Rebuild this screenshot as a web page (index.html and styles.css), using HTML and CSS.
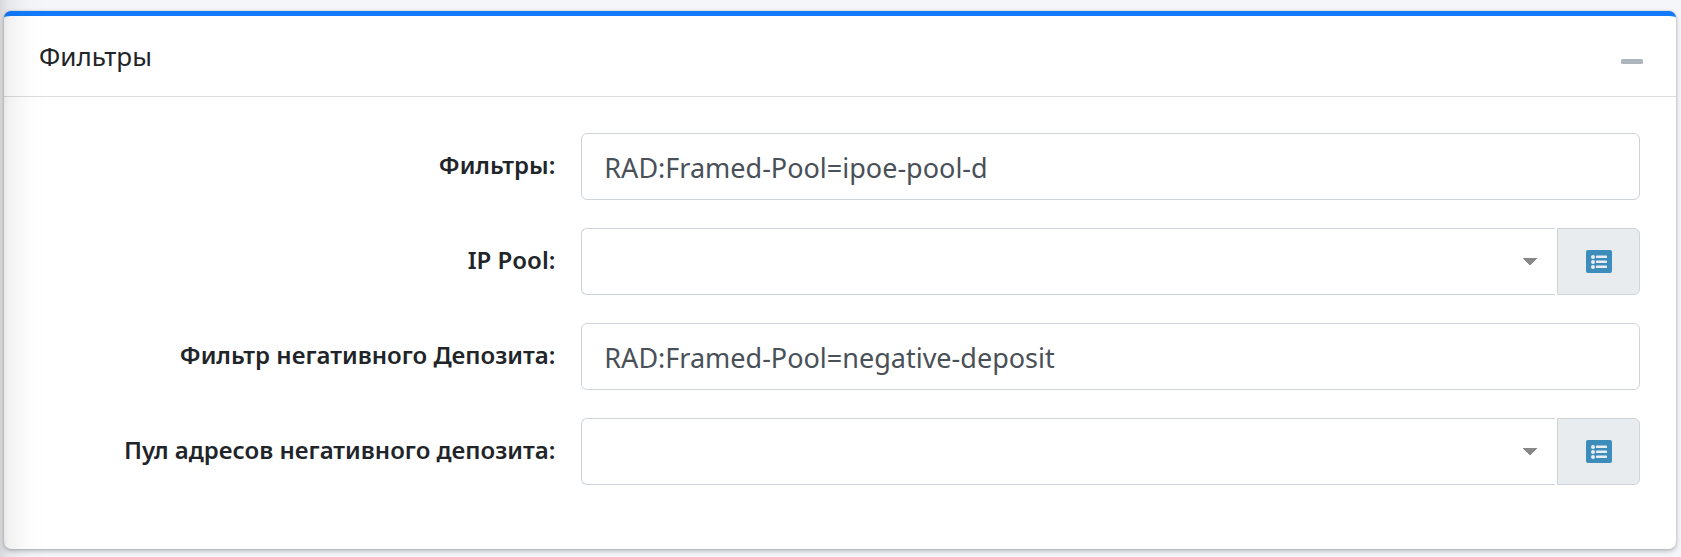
FILE: index.html
```html
<!DOCTYPE html>
<html lang="ru">
<head>
    <meta charset="UTF-8">
    <meta name="viewport" content="width=device-width, initial-scale=1.0">
    <title>Фильтры</title>
    <link rel="stylesheet" href="styles.css">
</head>
<body>
    <form class="card">
        <header class="card-header">
            <h3 class="card-title">Фильтры</h3>
            <button type="button" class="btn-tool" aria-label="Свернуть">
                <svg width="22" height="5" viewBox="0 0 22 5"><rect width="22" height="5" rx="1.5" fill="#adb5bd"/></svg>
            </button>
        </header>
        <div class="card-body">
            <div class="form-group">
                <label for="filters">Фильтры:</label>
                <div class="field">
                    <input type="text" id="filters" class="form-control" value="RAD:Framed-Pool=ipoe-pool-d">
                </div>
            </div>
            <div class="form-group">
                <label for="ipPool">IP Pool:</label>
                <div class="field input-group">
                    <select id="ipPool" class="form-control select">
                        <option value=""></option>
                    </select>
                    <a href="#" class="input-group-text" aria-label="IP Pool">
                        <svg width="26" height="23" viewBox="0 0 26 23">
                            <rect width="26" height="23" rx="2" fill="#3c8dbc"/>
                            <g fill="#e9ecef">
                                <circle cx="7" cy="7" r="2"/>
                                <circle cx="7" cy="12" r="2"/>
                                <circle cx="7" cy="17" r="2"/>
                                <rect x="10" y="5.5" width="11" height="2.5" rx=".5"/>
                                <rect x="10" y="10.5" width="11" height="2.5" rx=".5"/>
                                <rect x="10" y="15.5" width="11" height="2.5" rx=".5"/>
                            </g>
                        </svg>
                    </a>
                </div>
            </div>
            <div class="form-group">
                <label for="negFilter">Фильтр негативного Депозита:</label>
                <div class="field">
                    <input type="text" id="negFilter" class="form-control" value="RAD:Framed-Pool=negative-deposit">
                </div>
            </div>
            <div class="form-group">
                <label for="negPool">Пул адресов негативного депозита:</label>
                <div class="field input-group">
                    <select id="negPool" class="form-control select">
                        <option value=""></option>
                    </select>
                    <a href="#" class="input-group-text" aria-label="Пул адресов">
                        <svg width="26" height="23" viewBox="0 0 26 23">
                            <rect width="26" height="23" rx="2" fill="#3c8dbc"/>
                            <g fill="#e9ecef">
                                <circle cx="7" cy="7" r="2"/>
                                <circle cx="7" cy="12" r="2"/>
                                <circle cx="7" cy="17" r="2"/>
                                <rect x="10" y="5.5" width="11" height="2.5" rx=".5"/>
                                <rect x="10" y="10.5" width="11" height="2.5" rx=".5"/>
                                <rect x="10" y="15.5" width="11" height="2.5" rx=".5"/>
                            </g>
                        </svg>
                    </a>
                </div>
            </div>
        </div>
    </form>
</body>
</html>
```
FILE: styles.css
```css
* {
    box-sizing: border-box;
}

body {
    margin: 0;
    padding: 11px 5px 8px 4px;
    background-color: #f4f6f9;
    color: #212529;
    font-family: "Noto Sans", "Open Sans", sans-serif;
    font-size: 24px;
}

/* shadow of the side menu */
body::before {
    content: "";
    position: fixed;
    top: 0;
    bottom: 0;
    left: 0;
    width: 46px;
    background: linear-gradient(to right, rgba(0, 0, 0, .12), rgba(0, 0, 0, .05) 20%, rgba(0, 0, 0, .01) 60%, transparent);
    pointer-events: none;
}

.card {
    background-color: #fff;
    border-top: 5px solid #137bfb;
    border-radius: 7px;
    box-shadow: 0 0 2px rgba(0, 0, 0, .2), 0 2px 5px rgba(0, 0, 0, .25);
}

.card-header {
    display: flex;
    align-items: center;
    justify-content: space-between;
    height: 81px;
    padding: 0 33px 0 35px;
    border-bottom: 1px solid #dcdcdd;
}

.card-title {
    margin: 0;
    font-size: 26px;
    font-weight: 400;
    line-height: 40px;
}

.btn-tool {
    display: flex;
    padding: 10px 0 0;
    border: 0;
    background: transparent;
}

.card-body {
    padding: 36px 23px 64px 22px;
}

.form-group {
    display: grid;
    grid-template-columns: 1fr 2fr;
    margin-bottom: 28px;
}

.form-group:last-child {
    margin-bottom: 0;
}

.form-group label {
    padding: 12px 13px 0;
    font-weight: 600;
    line-height: 40px;
    text-align: right;
    white-space: nowrap;
}

.field {
    padding: 0 13px;
}

.form-control {
    display: block;
    width: 100%;
    height: 67px;
    padding: 2px 22px 0;
    border: 1px solid #ced4da;
    border-radius: 6px;
    background-color: #fff;
    color: #495057;
    font-family: inherit;
    font-size: 27px;
}

.input-group {
    display: flex;
    gap: 2px;
}

.select {
    flex: 1;
    appearance: none;
    border-right: 0;
    border-radius: 6px 0 0 6px;
    background-image: linear-gradient(to top right, transparent 50%, #888 50%), linear-gradient(to top left, transparent 50%, #888 50%);
    background-position: right 25px center, right 18px center;
    background-repeat: no-repeat;
    background-size: 7px 8px;
}

.input-group-text {
    display: flex;
    align-items: center;
    justify-content: center;
    width: 83px;
    border: 1px solid #ced4da;
    border-radius: 0 6px 6px 0;
    background-color: #e9ecef;
}
```
